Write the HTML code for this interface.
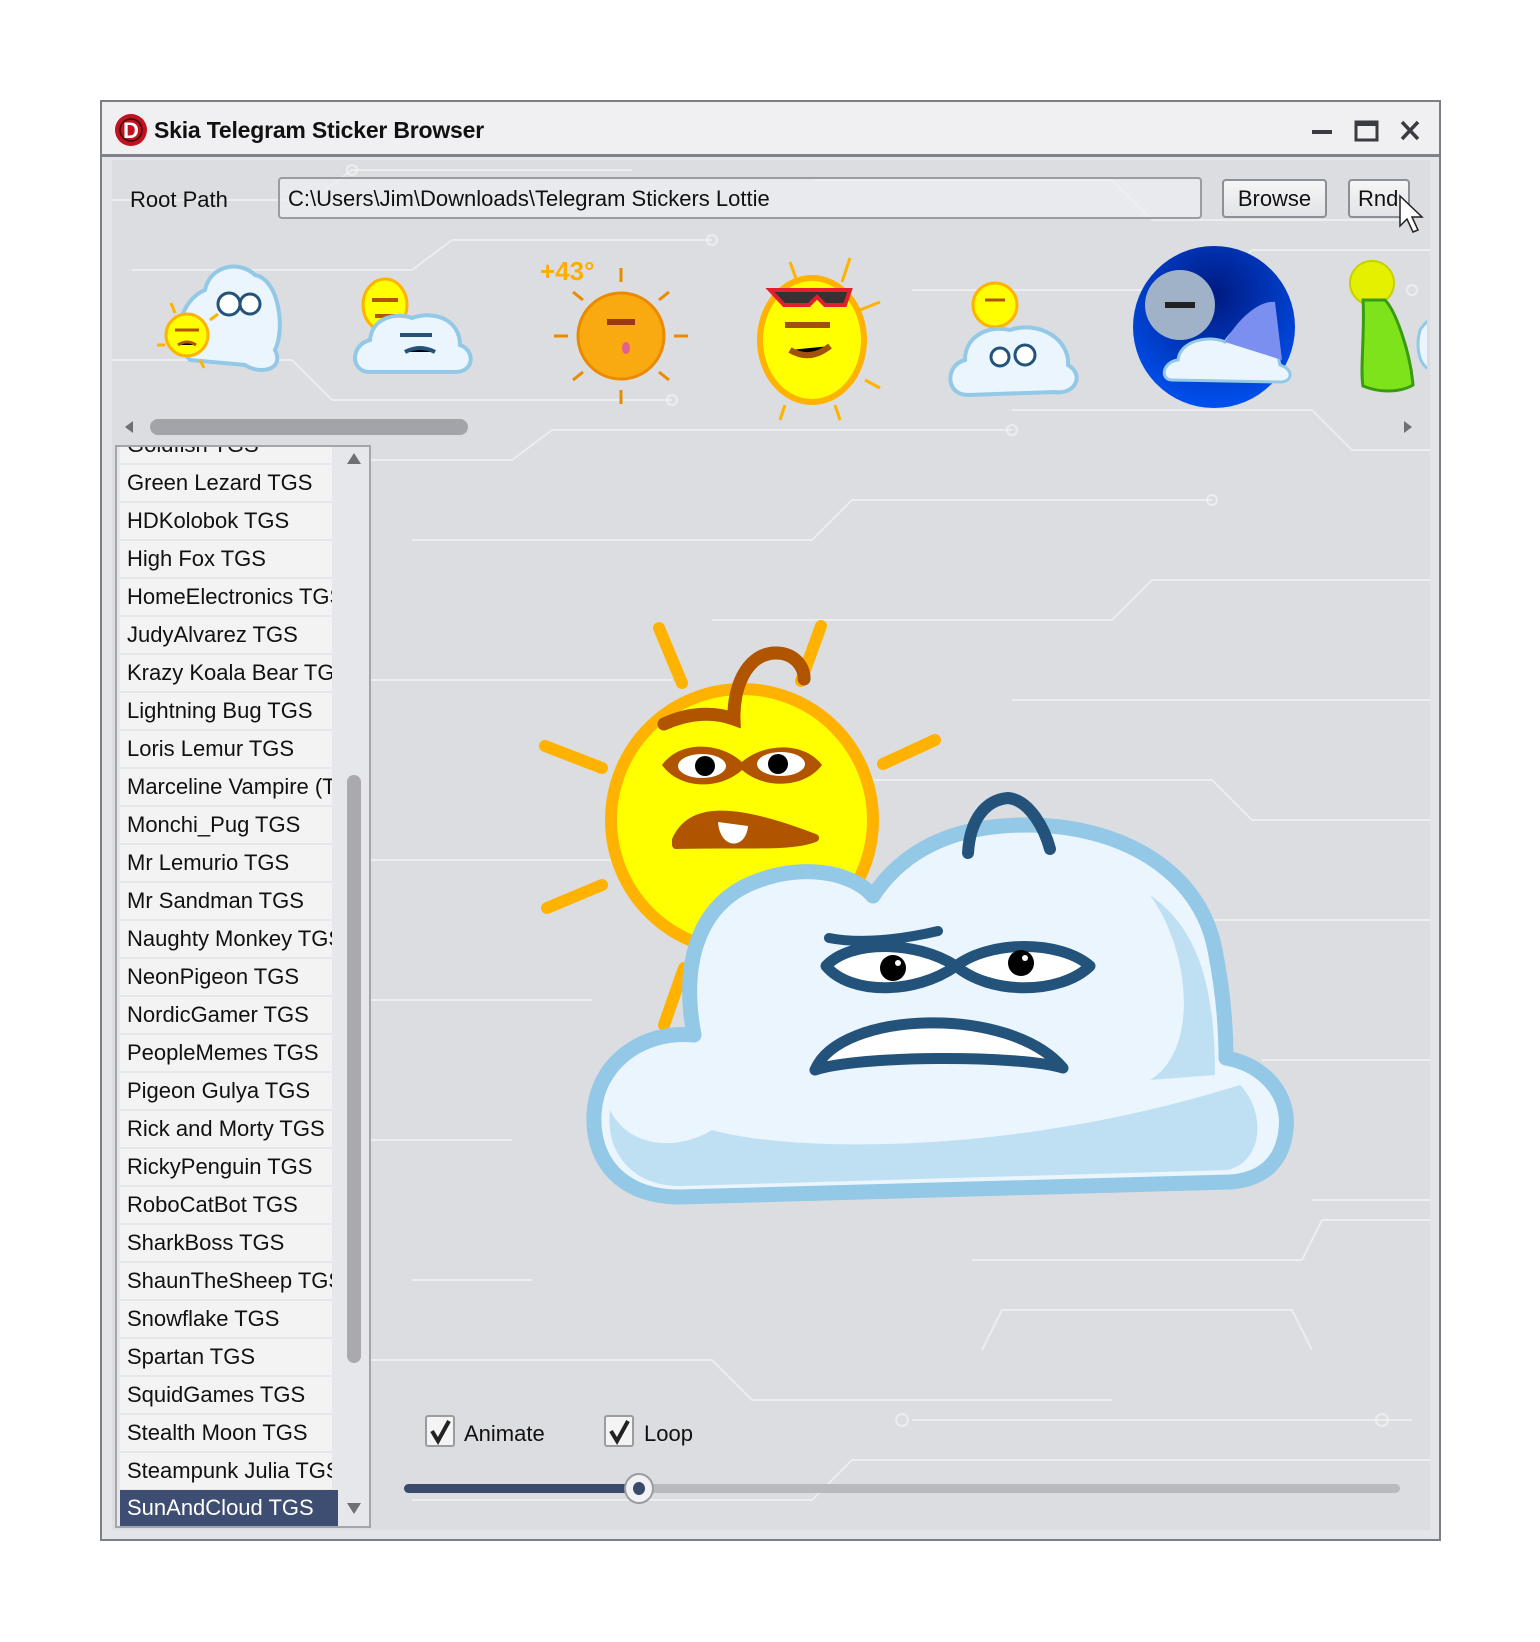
<!DOCTYPE html>
<html><head><meta charset="utf-8"><style>
*{margin:0;padding:0;box-sizing:border-box}
body{width:1540px;height:1642px;background:#fff;position:relative;overflow:hidden;font-family:"Liberation Sans","DejaVu Sans",sans-serif;color:#111}
.abs{position:absolute}
#win{left:100px;top:100px;width:1341px;height:1441px;border:2px solid #7c7f86;background:#e4e5e8}
#title{left:102px;top:102px;width:1337px;height:55px;background:#f0f0f2;border-bottom:3px solid #7f828a}
#content{left:112px;top:160px;width:1318px;height:1370px;background:#dcdde1;overflow:hidden}
.t{font-size:22px;white-space:nowrap}
.btn{border:2px solid #8c8f96;border-radius:4px;background:linear-gradient(#f6f6f7,#e2e3e6);font-size:22px;text-align:center}
#list{left:115px;top:445px;width:256px;height:1083px;border:2px solid #a3a5aa;background:#e6e7ea;overflow:hidden}
.it{position:absolute;left:3px;width:212px;height:36px;background:rgba(245,245,246,.85);font-size:22px;line-height:36px;padding-left:7px;white-space:nowrap;overflow:hidden}
.sel{background:#3e4e72;color:#fff}
.cb{width:30px;height:32px;border:2px solid #9a9ca2;border-radius:3px;background:#f4f4f5}
</style></head><body>
<div id="win" class="abs"></div>
<div id="title" class="abs"></div>
<svg class="abs" style="left:114px;top:113px" width="34" height="34" viewBox="0 0 34 34"><circle cx="17" cy="17" r="16" fill="#c1121f"/><circle cx="17" cy="17" r="11" fill="none" stroke="#3a0a0a" stroke-width="1.5"/><text x="17" y="25" text-anchor="middle" font-family="Liberation Sans" font-weight="bold" font-size="22" fill="#fff">D</text></svg>
<div class="abs" style="left:154px;top:117px;font-size:23px;font-weight:bold;letter-spacing:-0.2px">Skia Telegram Sticker Browser</div>
<svg class="abs" style="left:1300px;top:112px" width="130" height="36"><rect x="12" y="18" width="20" height="4" fill="#3a3c42"/><rect x="56" y="10" width="21" height="18" fill="none" stroke="#3a3c42" stroke-width="3"/><rect x="56" y="9" width="21" height="5" fill="#3a3c42"/><path d="M102 10 L118 27 M118 10 L102 27" stroke="#3a3c42" stroke-width="3.5"/></svg>
<div id="content" class="abs">
<svg width="1318" height="1370" style="position:absolute;left:0;top:0" stroke="#f2f3f5" stroke-opacity=".7" fill="none" stroke-width="2">
<path d="M0 40 H200 L240 10 H520 M20 110 H300 L340 80 H600 M0 200 H180 L220 240 H560 M40 300 H400 L440 270 H900 M700 20 H1000 L1040 60 H1300 M800 130 H1100 L1140 90 H1318 M900 250 H1200 L1240 290 H1318 M300 380 H700 L740 340 H1100 M600 460 H1000 L1040 420 H1318 M250 520 H560 M900 540 H1318 M700 620 H1100 L1140 660 H1318 M250 700 H500 M1100 760 H1318 M250 840 H480 M1150 900 H1318 M250 980 H400 M1200 1040 H1318 M300 1120 H420 M860 1100 H1190 L1210 1060 H1318 M250 1200 H600 L640 1240 H1000 M800 1260 H1300 M870 1190 L890 1150 H1180 L1200 1190 M300 1340 H700 L740 1300 H1318"/>
<g fill="none"><circle cx="240" cy="10" r="5"/><circle cx="600" cy="80" r="5"/><circle cx="900" cy="270" r="5"/><circle cx="1100" cy="340" r="5"/><circle cx="560" cy="240" r="5"/><circle cx="1300" cy="130" r="5"/><circle cx="790" cy="1260" r="6"/><circle cx="1270" cy="1260" r="6"/></g>
</svg>
</div>
<div class="abs t" style="left:130px;top:187px">Root Path</div>
<div class="abs" style="left:278px;top:177px;width:924px;height:42px;border:2px solid #9a9ca2;border-radius:4px;background:rgba(236,237,240,.8)"></div>
<div class="abs t" style="left:288px;top:186px">C:\Users\Jim\Downloads\Telegram Stickers Lottie</div>
<div class="abs btn" style="left:1222px;top:179px;width:105px;height:39px;line-height:35px">Browse</div>
<div class="abs btn" style="left:1348px;top:179px;width:62px;height:39px;line-height:35px;text-align:left;padding-left:8px;overflow:hidden">Rnd</div>
<svg class="abs" style="left:1398px;top:194px" width="30" height="44"><path d="M2 2 L2 32 L9 25 L15 38 L20 36 L14 23 L24 23 Z" fill="#fff" stroke="#222" stroke-width="1.5"/></svg>

<svg class="abs" style="left:112px;top:230px" width="1315" height="210" viewBox="112 230 1315 210">
<path d="M190 360 C170 340 180 300 205 290 C210 265 240 260 255 275 C280 280 285 330 275 350 C285 370 260 375 245 365 Z" fill="#eaf5fd" stroke="#93c8e6" stroke-width="4"/>
<circle cx="229" cy="304" r="11" fill="#fff" stroke="#23527a" stroke-width="3"/><circle cx="250" cy="304" r="10" fill="#fff" stroke="#23527a" stroke-width="3"/>
<circle cx="187" cy="335" r="21" fill="#ff0" stroke="#ffb300" stroke-width="3"/><path d="M175 330 h24 M178 345 q9 -6 18 0" stroke="#b05400" stroke-width="3"/>
<path d="M165 345 h-8 M210 320 l8 -6 M175 313 l-4 -10 M200 360 l4 8" stroke="#ffb300" stroke-width="3"/>
<ellipse cx="385" cy="305" rx="22" ry="26" fill="#ff0" stroke="#ffb300" stroke-width="3"/><path d="M372 300 h26 M375 316 h20" stroke="#b05400" stroke-width="4"/>
<path d="M370 372 C350 372 350 345 370 340 C372 318 395 312 412 318 C435 310 460 320 460 345 C475 350 475 372 455 372 Z" fill="#eaf5fd" stroke="#93c8e6" stroke-width="4"/>
<path d="M400 335 h32 M405 352 q15 -8 30 0" stroke="#23527a" stroke-width="4"/>
<text x="540" y="280" font-family="Liberation Sans" font-weight="bold" font-size="26" fill="#ffae00">+43°</text>
<circle cx="621" cy="336" r="43" fill="#f8aa10" stroke="#ea8a00" stroke-width="3"/>
<path d="M621 282 v-14 M621 390 v14 M568 336 h-14 M674 336 h14 M583 300 l-10 -8 M659 300 l10 -8 M583 372 l-10 8 M659 372 l10 8" stroke="#ea8a00" stroke-width="3"/>
<path d="M607 322 h28" stroke="#9a3a10" stroke-width="6"/><ellipse cx="626" cy="348" rx="4" ry="6" fill="#e06090"/>
<ellipse cx="812" cy="340" rx="52" ry="62" fill="#ff0" stroke="#ffb300" stroke-width="6"/>
<path d="M770 290 h80 l-5 15 h-20 l-8 -8 l-8 8 h-25 z" fill="#333" stroke="#e21f2e" stroke-width="4"/>
<path d="M785 325 h45 M790 350 q20 12 40 -4" stroke="#a0520b" stroke-width="6"/>
<path d="M790 262 l8 22 M850 258 l-8 24 M860 310 l20 -8 M785 405 l-5 15 M835 405 l5 15 M865 380 l15 8" stroke="#ffb300" stroke-width="3"/>
<circle cx="995" cy="305" r="22" fill="#ff0" stroke="#ffb300" stroke-width="3"/><path d="M985 300 h20" stroke="#b05400" stroke-width="3"/>
<path d="M968 395 C945 395 945 365 965 360 C965 335 990 325 1010 330 C1040 320 1070 340 1068 365 C1085 375 1075 395 1055 392 Z" fill="#eaf5fd" stroke="#93c8e6" stroke-width="4"/>
<circle cx="1000" cy="357" r="9" fill="#fff" stroke="#23527a" stroke-width="3"/><circle cx="1025" cy="355" r="10" fill="#fff" stroke="#23527a" stroke-width="3"/>
<defs><radialGradient id="bg6" cx="50%" cy="30%" r="70%"><stop offset="0" stop-color="#001a80"/><stop offset="1" stop-color="#0050ef"/></radialGradient></defs>
<circle cx="1214" cy="327" r="81" fill="url(#bg6)"/>
<circle cx="1180" cy="305" r="35" fill="#9fb2c8"/><path d="M1165 305 h30" stroke="#222" stroke-width="6"/>
<path d="M1172 380 C1160 380 1162 362 1178 360 C1180 340 1210 335 1225 342 C1240 320 1265 310 1270 320 L1280 365 C1295 370 1292 382 1280 382 Z" fill="#eaf5fd" stroke="#93c8e6" stroke-width="3"/>
<path d="M1225 342 C1240 315 1262 300 1275 302 L1282 360" fill="#7a8ff0"/>
<circle cx="1372" cy="283" r="22" fill="#e3f000" stroke="#c8d000" stroke-width="2"/>
<path d="M1363 300 C1365 330 1360 370 1363 386 C1385 395 1405 390 1413 385 C1410 350 1395 310 1385 300 Z" fill="#7fe31c" stroke="#3a9a10" stroke-width="3"/>
<path d="M1420 330 C1427 320 1430 320 1430 320 V370 C1420 365 1415 350 1420 330Z" fill="#eaf5fd" stroke="#93c8e6" stroke-width="3"/>
</svg>

<svg class="abs" style="left:120px;top:418px" width="1300" height="20"><path d="M5 9 L13 3 V15 Z" fill="#6e7076"/><rect x="30" y="1" width="318" height="16" rx="8" fill="#a3a4a9"/><path d="M1292 9 L1284 3 V15 Z" fill="#6e7076"/></svg>

<div id="list" class="abs">
<div class="it" style="top:-20px">Goldfish TGS</div>
<div class="it" style="top:18px">Green Lezard TGS</div>
<div class="it" style="top:56px">HDKolobok TGS</div>
<div class="it" style="top:94px">High Fox TGS</div>
<div class="it" style="top:132px">HomeElectronics TGS</div>
<div class="it" style="top:170px">JudyAlvarez TGS</div>
<div class="it" style="top:208px">Krazy Koala Bear TGS</div>
<div class="it" style="top:246px">Lightning Bug TGS</div>
<div class="it" style="top:284px">Loris Lemur TGS</div>
<div class="it" style="top:322px">Marceline Vampire (TGS)</div>
<div class="it" style="top:360px">Monchi_Pug TGS</div>
<div class="it" style="top:398px">Mr Lemurio TGS</div>
<div class="it" style="top:436px">Mr Sandman TGS</div>
<div class="it" style="top:474px">Naughty Monkey TGS</div>
<div class="it" style="top:512px">NeonPigeon TGS</div>
<div class="it" style="top:550px">NordicGamer TGS</div>
<div class="it" style="top:588px">PeopleMemes TGS</div>
<div class="it" style="top:626px">Pigeon Gulya TGS</div>
<div class="it" style="top:664px">Rick and Morty TGS</div>
<div class="it" style="top:702px">RickyPenguin TGS</div>
<div class="it" style="top:740px">RoboCatBot TGS</div>
<div class="it" style="top:778px">SharkBoss TGS</div>
<div class="it" style="top:816px">ShaunTheSheep TGS</div>
<div class="it" style="top:854px">Snowflake TGS</div>
<div class="it" style="top:892px">Spartan TGS</div>
<div class="it" style="top:930px">SquidGames TGS</div>
<div class="it" style="top:968px">Stealth Moon TGS</div>
<div class="it" style="top:1006px">Steampunk Julia TGS</div>
<div class="it sel" style="top:1043px;width:218px">SunAndCloud TGS</div>
<svg style="position:absolute;left:220px;top:0" width="32" height="1080"><path d="M17 6 L24 17 H10 Z" fill="#6e7076"/><rect x="10" y="328" width="14" height="588" rx="7" fill="#a9a9ae"/><path d="M17 1067 L24 1056 H10 Z" fill="#6e7076"/></svg>
</div>

<svg class="abs" style="left:0;top:0" width="1540" height="1642">
<g stroke="#ffb300" stroke-width="12" stroke-linecap="round">
<path d="M659 628 L682 683 M821 626 L801 681 M545 746 L602 768 M883 764 L935 740 M547 908 L602 885 M664 1025 L684 968"/></g>
<circle cx="742" cy="820" r="131" fill="#ff0" stroke="#ffb300" stroke-width="12"/>
<path d="M664 724 C690 712 715 712 734 719 C733 690 745 655 774 653 C795 652 805 668 804 679" fill="none" stroke="#b05400" stroke-width="13" stroke-linecap="round"/>
<path d="M662 765 C680 740 720 742 742 762 C765 742 805 742 822 765 C805 788 765 790 742 770 C720 790 680 790 662 765 Z" fill="#b05400"/>
<ellipse cx="702" cy="766" rx="24" ry="12" fill="#fff"/><ellipse cx="781" cy="764" rx="24" ry="12" fill="#fff"/>
<circle cx="705" cy="766" r="10" fill="#000"/><circle cx="778" cy="764" r="10" fill="#000"/>
<path d="M676 840 C690 808 730 805 815 838 C790 848 740 843 676 845 Z" fill="#b05400" stroke="#b05400" stroke-width="8" stroke-linejoin="round"/>
<path d="M718 822 C720 850 746 850 748 826 Z" fill="#fff"/>
<path d="M694 1035 C680 960 700 900 760 880 C800 865 850 870 873 896 C910 840 970 825 1027 825 C1120 825 1200 870 1215 950 C1225 1000 1226 1040 1226 1058 C1265 1065 1290 1095 1286 1130 C1282 1165 1260 1180 1230 1182 L680 1197 C620 1197 592 1160 594 1115 C596 1065 640 1030 694 1035 Z" fill="#eaf5fd" stroke="#93c8e6" stroke-width="15" stroke-linejoin="round"/>
<path d="M610 1110 C630 1150 680 1150 712 1130 C780 1150 1000 1160 1240 1085 C1265 1110 1265 1160 1228 1170 L680 1186 C630 1186 605 1150 610 1110 Z" fill="#bfe0f3"/>
<path d="M1150 895 C1190 950 1200 1050 1150 1080 L1215 1075 C1215 990 1200 930 1150 895 Z" fill="#bfe0f3"/>
<path d="M968 853 C970 820 985 800 1008 798 C1030 800 1045 830 1050 849" fill="none" stroke="#23527a" stroke-width="12" stroke-linecap="round"/>
<path d="M829 938 C860 944 900 940 938 931" fill="none" stroke="#23527a" stroke-width="10" stroke-linecap="round"/>
<path d="M826 966 C850 940 915 940 956 966 C990 940 1060 940 1090 966 C1060 995 990 995 956 966 C915 995 850 995 826 966 Z" fill="#fff" stroke="#23527a" stroke-width="11" stroke-linejoin="round"/>
<circle cx="893" cy="968" r="13" fill="#000"/><circle cx="1021" cy="963" r="13" fill="#000"/>
<circle cx="898" cy="963" r="3" fill="#fff"/><circle cx="1025" cy="958" r="3" fill="#fff"/>
<path d="M815 1070 C840 1010 1010 1005 1063 1068 C1020 1055 860 1055 815 1070 Z" fill="#fff" stroke="#23527a" stroke-width="11" stroke-linejoin="round"/>
</svg>

<div class="abs cb" style="left:425px;top:1415px"></div>
<svg class="abs" style="left:428px;top:1418px" width="26" height="28"><path d="M4 13 L10 23 L21 3" fill="none" stroke="#222" stroke-width="4"/></svg>
<div class="abs t" style="left:464px;top:1421px">Animate</div>
<div class="abs cb" style="left:604px;top:1415px"></div>
<svg class="abs" style="left:607px;top:1418px" width="26" height="28"><path d="M4 13 L10 23 L21 3" fill="none" stroke="#222" stroke-width="4"/></svg>
<div class="abs t" style="left:644px;top:1421px">Loop</div>

<div class="abs" style="left:404px;top:1484px;width:996px;height:9px;border-radius:5px;background:#b9babe"></div>
<div class="abs" style="left:404px;top:1484px;width:235px;height:9px;border-radius:5px;background:#3a4a6c"></div>
<div class="abs" style="left:624px;top:1473px;width:30px;height:31px;border-radius:50%;background:#f2f2f4;border:2px solid #9a9ca2"></div>
<div class="abs" style="left:633px;top:1482px;width:12px;height:13px;border-radius:50%;background:#3a4a6c"></div>
</body></html>
